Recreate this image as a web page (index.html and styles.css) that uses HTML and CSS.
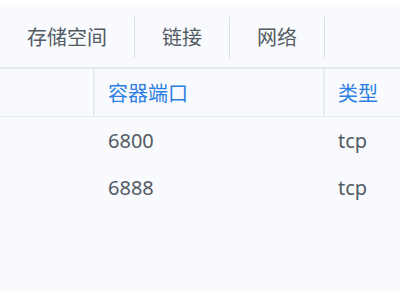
FILE: index.html
```html
<!DOCTYPE html>
<html lang="zh-CN">
<head>
    <meta charset="UTF-8">
    <title>容器端口</title>
    <link rel="stylesheet" href="styles.css">
</head>
<body>
<div class="panel">
    <ul class="tabs">
        <li>存储空间</li>
        <li>链接</li>
        <li>网络</li>
    </ul>
    <div class="grid">
        <div class="row head">
            <div class="cell"></div>
            <div class="cell">容器端口</div>
            <div class="cell">类型</div>
        </div>
        <div class="row">
            <div class="cell"></div>
            <div class="cell">6800</div>
            <div class="cell">tcp</div>
        </div>
        <div class="row">
            <div class="cell"></div>
            <div class="cell">6888</div>
            <div class="cell">tcp</div>
        </div>
    </div>
</div>
</body>
</html>
```

FILE: styles.css
```css
*{
    margin:0;
    padding:0;
    list-style: none;
    box-sizing: border-box;
}
body{
    background: #fff;
    font-family: "Noto Sans", "Noto Sans CJK SC", sans-serif;
    font-size: 20px;
    color: #535b64;
    overflow: hidden;
}
.panel{
    margin-top: 7px;
    height: 285px;
    background: #f8fafd;
}
.tabs{
    display: flex;
    align-items: center;
    height: 62px;
    border-bottom: 2px solid #e4e9f0;
}
.tabs li{
    padding: 0 27px;
    height: 41px;
    line-height: 41px;
    border-right: 1px solid #d8dfe7;
    color: #525a63;
}
.grid .row{
    display: grid;
    grid-template-columns: 93px 230px 1fr;
    height: 47px;
    align-items: center;
}
.grid .cell{
    padding-left: 15px;
    white-space: nowrap;
}
.grid .head{
    height: 48px;
    border-bottom: 1px solid #e6ebf1;
    color: #2d7fe2;
    align-items: stretch;
}
.grid .head .cell{
    display: flex;
    align-items: center;
}
.grid .head .cell + .cell{
    padding-left: 13px;
    border-left: 2px solid #e6ebf1;
}
```
